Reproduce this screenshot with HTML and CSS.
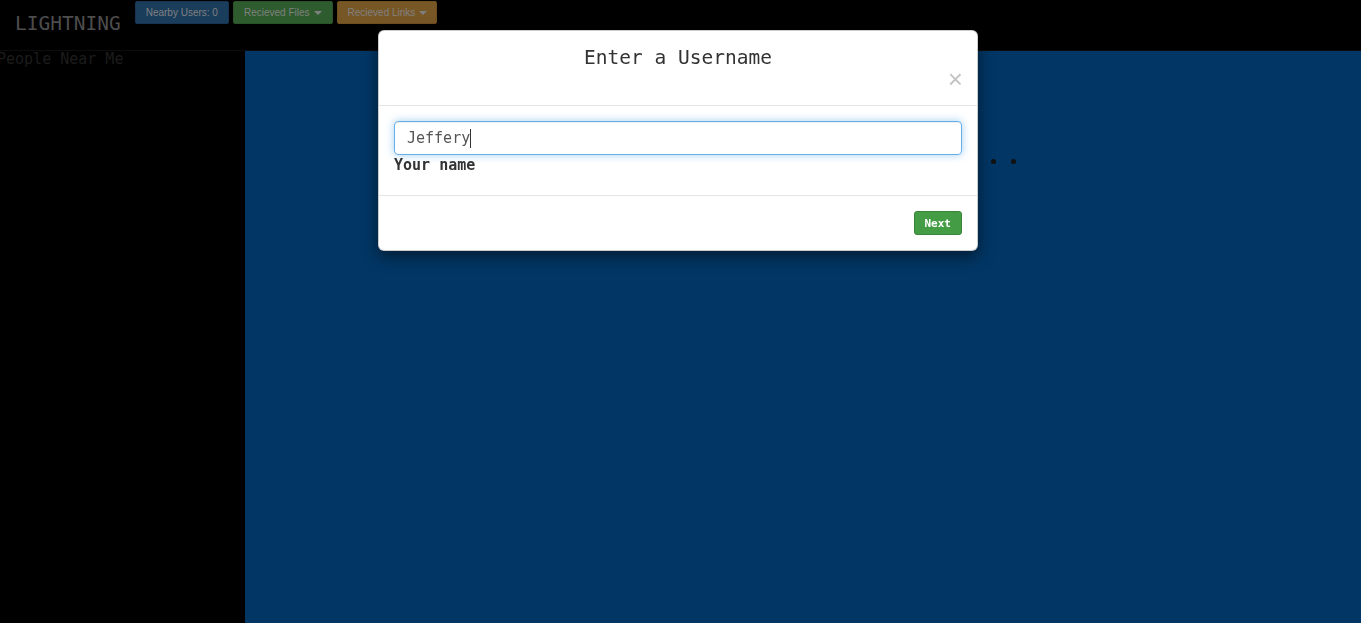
FILE: index.html
```html
<!DOCTYPE html>
<html>
<head>
<meta charset="utf-8">
<title>Lightning</title>
<link rel="stylesheet" href="styles.css">
</head>
<body>
<nav class="navbar">
  <div class="brand">LIGHTNING</div>
  <div class="nav-buttons">
    <span class="nbtn nbtn-primary">Nearby Users: 0</span>
    <span class="nbtn nbtn-success">Recieved Files<span class="caret"></span></span>
    <span class="nbtn nbtn-warning">Recieved Links<span class="caret"></span></span>
  </div>
</nav>
<div class="layout">
  <aside class="sidebar">
    <div class="side-title">People Near Me</div>
  </aside>
  <main class="main">
    <div class="dots"><span class="dot"></span><span class="dot"></span></div>
  </main>
</div>

<div class="modal">
  <div class="modal-header">
    <h4 class="modal-title">Enter a Username</h4>
    <div class="close-row"><span class="close">&times;</span></div>
  </div>
  <div class="modal-body">
    <div class="form-control"><span class="value">Jeffery</span><span class="text-caret"></span></div>
    <label class="field-label">Your name</label>
  </div>
  <div class="modal-footer">
    <span class="btn-next">Next</span>
  </div>
</div>
</body>
</html>
```
FILE: styles.css
```css
* { box-sizing: border-box; }
html, body { margin: 0; padding: 0; }
body {
  background: #000;
  height: 623px;
  overflow: hidden;
  font-family: "DejaVu Sans Mono", monospace;
  font-size: 15px;
  color: #333;
}
.navbar {
  display: flex;
  align-items: flex-start;
  height: 51px;
  border-bottom: 1px solid #0c0c0c;
}
.brand {
  padding: 14px 14px 0 15px;
  font-size: 19.5px;
  line-height: 20px;
  color: #4d4d4d;
}
.nav-buttons {
  display: flex;
  gap: 4px;
  margin-top: 1px;
}
.nbtn {
  display: flex;
  align-items: center;
  height: 23px;
  padding: 0 10px;
  border: 1px solid transparent;
  border-radius: 2px;
  font-family: "Liberation Sans", Arial, sans-serif;
  font-size: 10px;
  color: #808080;
}
.nbtn-primary { background: #1a3d5c; border-color: #173552; }
.nbtn-success { background: #2e5c2e; border-color: #2a532a; }
.nbtn-warning { background: #785727; border-color: #704f20; padding-right: 9px; }
.caret {
  display: inline-block;
  width: 0; height: 0;
  margin-left: 4px;
  border-top: 4px solid #808080;
  border-left: 4px solid transparent;
  border-right: 4px solid transparent;
}
.layout {
  display: flex;
  height: 572px;
}
.sidebar {
  width: 245px;
  flex: none;
  background: #000;
}
.side-title {
  margin-left: -3px;
  line-height: 16px;
  color: #1c1c1c;
  white-space: nowrap;
}
.main {
  flex: 1;
  background: #023664;
  padding-top: 108px;
}
.dots {
  display: flex;
  gap: 15px;
  margin-left: 746px;
}
.dot {
  width: 5px; height: 5px;
  border-radius: 50%;
  background: #111;
}
.modal {
  position: fixed;
  top: 30px;
  left: 378px;
  width: 600px;
  background: #fff;
  border: 1px solid rgba(0,0,0,.2);
  border-radius: 6px;
  box-shadow: 0 5px 15px rgba(0,0,0,.5);
}
.modal-header {
  padding: 15px;
  border-bottom: 1px solid #e5e5e5;
}
.modal-title {
  margin: 0;
  text-align: center;
  font-size: 19.5px;
  line-height: 23px;
  font-weight: normal;
  color: #333;
}
.close-row {
  display: flex;
  justify-content: flex-end;
  height: 21px;
}
.close {
  font-family: "Liberation Sans", Arial, sans-serif;
  font-size: 26px;
  font-weight: normal;
  line-height: 21px;
  color: #c4c4c4;
  margin-right: -1px;
}
.modal-body {
  padding: 15px;
}
.form-control {
  display: flex;
  align-items: center;
  height: 34px;
  padding: 6px 12px;
  border: 1px solid #66afe9;
  border-radius: 4px;
  box-shadow: inset 0 1px 1px rgba(0,0,0,.075), 0 0 8px rgba(102,175,233,.6);
  font-size: 15px;
  line-height: 20px;
  color: #555;
}
.text-caret {
  display: inline-block;
  width: 1px;
  height: 19px;
  background: #333;
}
.field-label {
  display: block;
  margin-bottom: 5px;
  font-weight: bold;
  line-height: 20px;
  color: #333;
}
.modal-footer {
  display: flex;
  justify-content: flex-end;
  padding: 15px;
  border-top: 1px solid #e5e5e5;
}
.btn-next {
  display: flex;
  align-items: center;
  height: 24px;
  padding: 0 10px;
  background: #449d44;
  border: 1px solid #398439;
  border-radius: 3px;
  color: #fff;
  font-size: 11px;
  font-weight: bold;
}
```
